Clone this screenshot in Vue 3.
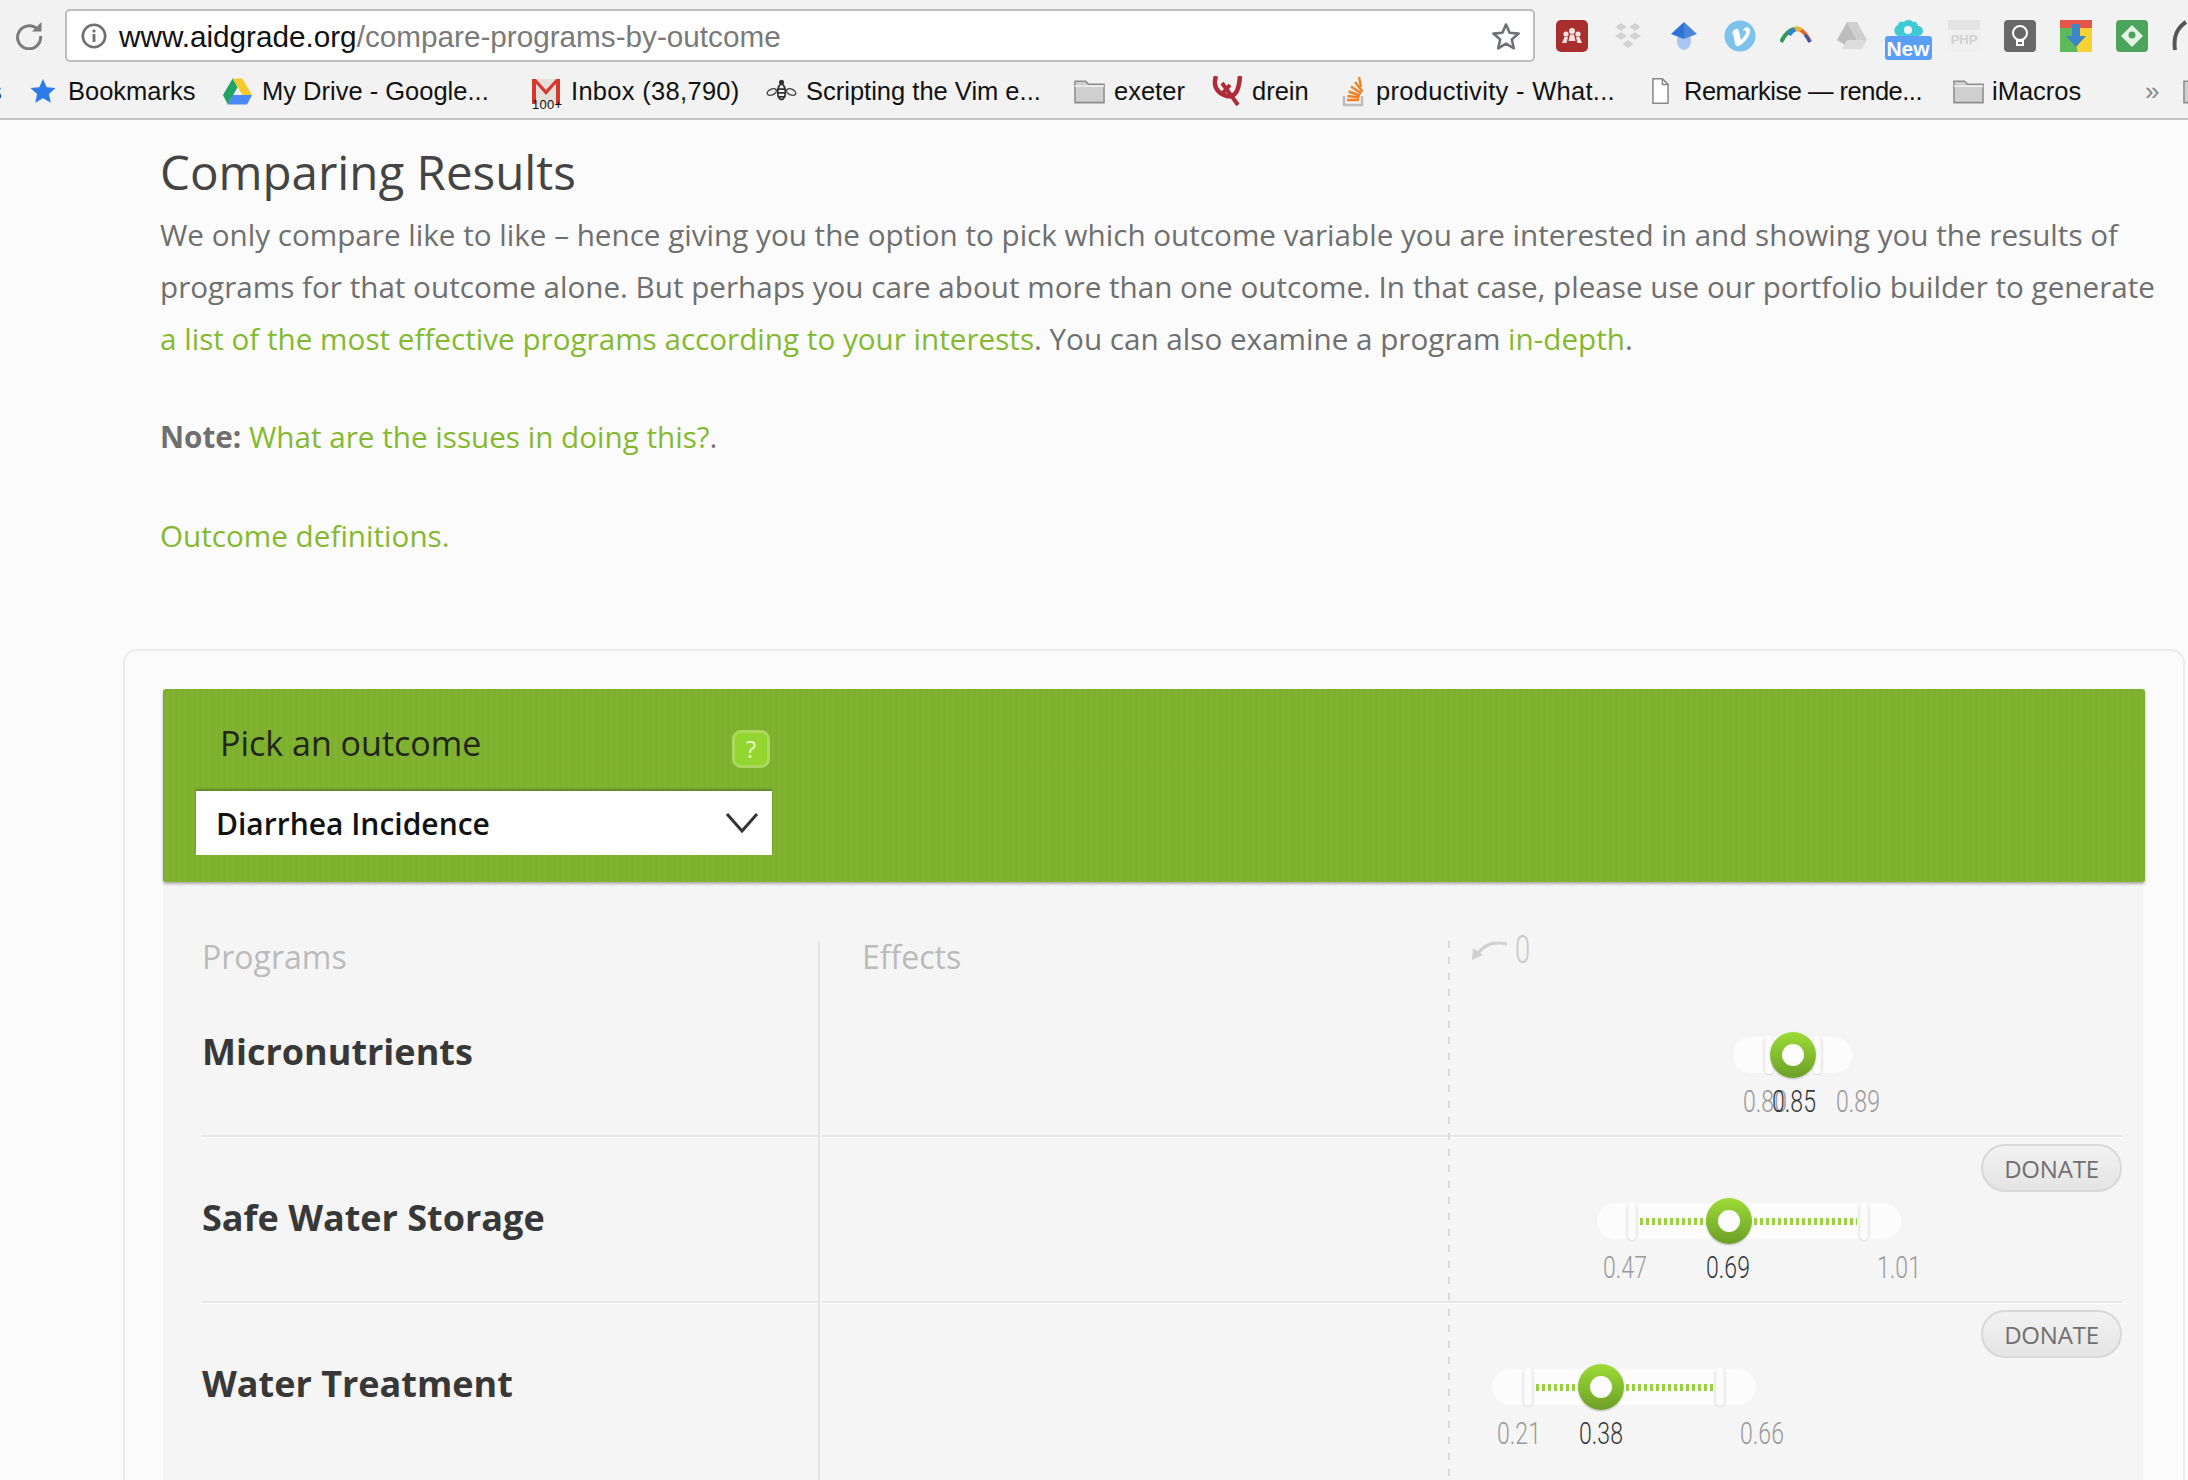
<template>
  <div class="page">
    <header class="chrome">
      <div class="toolbar">
        <svg class="reload" viewBox="0 0 28 28" width="28" height="28">
          <path d="M22.5 7.5A11.5 11.5 0 1 0 25.5 14" fill="none" stroke="#7b7b7b" stroke-width="3" />
          <path d="M17 9.5h9.5V0z" fill="#7b7b7b" />
        </svg>
        <div class="omnibox">
          <svg class="info" viewBox="0 0 26 26" width="26" height="26">
            <circle cx="13" cy="13" r="11.2" fill="none" stroke="#6f6f6f" stroke-width="2.6" />
            <rect x="11.6" y="11" width="2.8" height="8" fill="#6f6f6f" />
            <rect x="11.6" y="6.6" width="2.8" height="2.8" fill="#6f6f6f" />
          </svg>
          <span class="url"><span class="host">www.aidgrade.org</span>/compare-programs-by-outcome</span>
          <svg class="bookmark-star" viewBox="0 0 30 28" width="30" height="28">
            <path d="M15 2.5l3.6 8.3 9 .8-6.8 5.9 2 8.8-7.800-4.600-7.800 4.600 2-8.800-6.800-5.900 9-.8z" fill="none" stroke="#6e7278" stroke-width="2.600" stroke-linejoin="round" />
          </svg>
        </div>
        <div class="extensions">
          <span class="ext">
            <svg viewBox="0 0 32 32" width="32" height="32">
              <rect width="32" height="32" rx="5" fill="#a92e2e" />
              <circle cx="16" cy="11" r="3" fill="#f6e2e2" />
              <circle cx="10" cy="14" r="2.600" fill="#f6e2e2" />
              <circle cx="22" cy="14" r="2.600" fill="#f6e2e2" />
              <path d="M12.500 21l1.500-6.500h4l1.500 6.500zM6 23l2.500-6h3.500l-1.500 6zM26 23l-2.500-6H20l1.500 6z" fill="#f6e2e2" />
            </svg>
          </span>
          <span class="ext">
            <svg viewBox="0 0 32 32" width="32" height="32">
              <path d="M9 3l6 4-6 4-6-4zM23 3l6 4-6 4-6-4zM9 12l6 4-6 4-6-4zM23 12l6 4-6 4-6-4zM16 20l6 4-6 4-6-4z" fill="#d3d3d3" />
            </svg>
          </span>
          <span class="ext">
            <svg viewBox="0 0 32 32" width="32" height="32">
              <ellipse cx="16" cy="21" rx="7" ry="9" fill="#a8c8f4" />
              <path d="M16 2l13 12-13 5z" fill="#4d86d8" />
              <path d="M16 2L3 14l13 5z" fill="#2d74d8" />
            </svg>
          </span>
          <span class="ext">
            <svg viewBox="0 0 32 32" width="32" height="32">
              <circle cx="16" cy="16" r="15.500" fill="#7cc2ea" />
              <path d="M9 11c3-3 5-3 6 0l2 9c3-3 5-6 5-8 0-2-2-2-3-1 1-5 8-5 7 1-1 6-7 12-11 14-2 1-4-1-4-3l-2-9-1 .5z" fill="#fff" />
            </svg>
          </span>
          <span class="ext">
            <svg viewBox="0 0 32 32" width="32" height="32">
              <path d="M1 22C5 14 10 10 14 9" fill="none" stroke="#2e9d57" stroke-width="4" />
              <path d="M9 15c2-3 4-5 7-6" fill="none" stroke="#2f7fd8" stroke-width="4" />
              <path d="M15 9c2-1 4 0 6 1" fill="none" stroke="#e9b52e" stroke-width="5" />
              <path d="M21 10c4 3 7 7 9 12" fill="none" stroke="#e6632c" stroke-width="4" />
              <path d="M25 15c2 2 4 5 5 7" fill="none" stroke="#2f58b8" stroke-width="3" />
            </svg>
          </span>
          <span class="ext">
            <svg viewBox="0 0 32 32" width="32" height="32">
              <path d="M11 2h10l10 18H21z" fill="#cfcfcf" />
              <path d="M11 2l10 18-5 9L1 20z" fill="#bdbdbd" />
              <path d="M6 29l5-9h20l-5 9z" fill="#dcdcdc" />
            </svg>
          </span>
          <span class="ext ext-new">
            <svg viewBox="0 0 32 16" width="32" height="16">
              <path d="M6 16a6 6 0 0 1 0-11 4 4 0 0 1 6-3 6 6 0 0 1 9 0 4 4 0 0 1 5 4 5 5 0 0 1 0 10z" fill="#3ecbd6" />
              <circle cx="16" cy="10" r="4" fill="#f2f2f2" />
            </svg>
            <span class="new-tag">New</span>
          </span>
          <span class="ext">
            <span class="php-icon">PHP</span>
          </span>
          <span class="ext">
            <svg viewBox="0 0 32 32" width="32" height="32">
              <rect width="32" height="32" rx="4" fill="#686868" />
              <circle cx="16" cy="13" r="7" fill="none" stroke="#fff" stroke-width="2" />
              <path d="M13 21h6v4h-6z" fill="none" stroke="#fff" stroke-width="2" />
            </svg>
          </span>
          <span class="ext">
            <svg viewBox="0 0 32 32" width="32" height="32">
              <path d="M0 0h32v8H0z" fill="#e5554a" />
              <path d="M0 8h12l6 24H0z" fill="#5cba5c" />
              <path d="M32 8v24H18l-6-24z" fill="#f7d234" />
              <path d="M12 4h8v12h6L16 27 6 16h6z" fill="#3e86c8" />
            </svg>
          </span>
          <span class="ext">
            <svg viewBox="0 0 32 32" width="32" height="32">
              <rect width="32" height="32" rx="4" fill="#4ba35c" />
              <path d="M16 5l11 11-11 11L5 16z" fill="#e6f4e6" />
              <circle cx="16" cy="15" r="3.500" fill="#4ba35c" />
            </svg>
          </span>
          <span class="ext">
            <svg viewBox="0 0 32 32" width="32" height="32">
              <path d="M14 2C5 8 1 16 3 30" fill="none" stroke="#555" stroke-width="4" />
            </svg>
          </span>
        </div>
      </div>
      <nav class="bookmarks">
        <span class="cut">s</span>
        <a class="bm bm-a">
          <svg viewBox="0 0 26 26" width="26" height="26">
            <path d="M13 1l3.700 8.200 8.800.9-6.600 5.900 1.900 8.700L13 20.300l-7.800 4.400 1.900-8.700L.5 10.100l8.800-.9z" fill="#2b7be8" />
          </svg>
          Bookmarks
        </a>
        <a class="bm bm-b">
          <svg viewBox="0 0 32 28" width="31" height="28">
            <path d="M11 1h10l10 17H21z" fill="#f6c92d" />
            <path d="M11 1l5 9-10 18-5-10z" fill="#1fa463" />
            <path d="M6 28l5-10h20l-5 10z" fill="#4a8af4" />
          </svg>
          My Drive - Google...
        </a>
        <a class="bm bm-c">
          <span class="gmail">
            <svg viewBox="0 0 28 26" width="28" height="26">
              <rect y="1" width="28" height="25" fill="#e4e0dc" />
              <path d="M0 1h4v25H0zM24 1h4v25h-4zM0 1h4l10 11L24 1h4L14 17z" fill="#d8382c" />
            </svg>
            <span class="gmail-count">100+</span>
          </span>
          Inbox (38,790)
        </a>
        <a class="bm bm-d">
          <svg viewBox="0 0 32 26" width="31" height="26">
            <ellipse cx="16" cy="14" rx="4" ry="8" fill="none" stroke="#333" stroke-width="1.800" />
            <path d="M12 11h8M12 15h8M12 19h8" stroke="#333" stroke-width="1.800" />
            <circle cx="16" cy="4" r="2.600" fill="#333" />
            <ellipse cx="6" cy="14" rx="5" ry="3" transform="rotate(-25 6 14)" fill="none" stroke="#444" stroke-width="1.500" />
            <ellipse cx="26" cy="14" rx="5" ry="3" transform="rotate(25 26 14)" fill="none" stroke="#444" stroke-width="1.500" />
          </svg>
          Scripting the Vim e...
        </a>
        <a class="bm bm-e">
          <svg class="folder" viewBox="0 0 32 26" width="31" height="26">
            <path d="M1 3h11l3 3h16v19H1z" fill="#cfcfcf" stroke="#8d8d8d" stroke-width="1.600" />
            <path d="M1 8h30" stroke="#f2f2f2" stroke-width="1.600" />
          </svg>
          exeter
        </a>
        <a class="bm bm-f">
          <svg viewBox="0 0 32 30" width="32" height="30">
            <path d="M5 0c-3 9 0 17 11 20 9 2 12-7 13-20" fill="none" stroke="#ad2c38" stroke-width="4.500" />
            <path d="M11 7l16 22M19 9l-8 9" fill="none" stroke="#ad2c38" stroke-width="4" />
          </svg>
          drein
        </a>
        <a class="bm bm-g">
          <svg viewBox="0 0 22 32" width="22" height="32">
            <path d="M2 21v9h18v-9" fill="none" stroke="#bcbcbc" stroke-width="2.500" />
            <path d="M5 25h12M5.500 21l12 1.500M6.500 16.500l11.500 4M9 11.500l10.500 7M13 7l7.500 9.500M17 2l2 10" fill="none" stroke="#f48024" stroke-width="2.400" />
          </svg>
          productivity - What...
        </a>
        <a class="bm bm-h">
          <svg viewBox="0 0 18 28" width="17" height="28">
            <path d="M1 1h10l6 6v20H1z" fill="#fff" stroke="#888" stroke-width="1.600" />
            <path d="M11 1v6h6" fill="none" stroke="#888" stroke-width="1.600" />
          </svg>
          Remarkise — rende...
        </a>
        <a class="bm bm-i">
          <svg class="folder" viewBox="0 0 32 26" width="31" height="26">
            <path d="M1 3h11l3 3h16v19H1z" fill="#cfcfcf" stroke="#8d8d8d" stroke-width="1.600" />
            <path d="M1 8h30" stroke="#f2f2f2" stroke-width="1.600" />
          </svg>
          iMacros
        </a>
        <span class="more">»</span>
        <svg class="folder folder-cut" viewBox="0 0 32 26" width="31" height="26">
          <path d="M1 3h11l3 3h16v19H1z" fill="#cfcfcf" stroke="#8d8d8d" stroke-width="1.600" />
        </svg>
      </nav>
    </header>

    <main class="content">
      <section class="intro">
        <h1>Comparing Results</h1>
        <p class="lead">
          We only compare like to like – hence giving you the option to pick which outcome variable you are
          interested in and showing you the results of programs for that outcome alone. But perhaps you care
          about more than one outcome. In that case, please use our portfolio builder to generate
          <a>a list of the most effective programs according to your interests</a>. You can also examine a
          program <a>in-depth</a>.
        </p>
        <p class="lead note"><strong>Note:</strong> <a>What are the issues in doing this?</a>.</p>
        <p class="lead defs"><a>Outcome definitions.</a></p>
      </section>

      <section class="card">
        <div class="picker">
          <div class="picker-head">
            <h2>Pick an outcome</h2>
            <span class="help">?</span>
          </div>
          <div class="select">
            <span>Diarrhea Incidence</span>
            <svg viewBox="0 0 34 22" width="34" height="22">
              <path d="M2 2l15 17L32 2" fill="none" stroke="#333" stroke-width="3" />
            </svg>
          </div>
        </div>

        <div class="table">
          <div class="table-head">
            <span class="th-programs">Programs</span>
            <span class="th-effects">Effects</span>
            <span class="zero">
              <svg viewBox="0 0 38 22" width="38" height="22">
                <path d="M36 5C22 2 12 6 6 16" fill="none" stroke="#d0d0d0" stroke-width="3" />
                <path d="M1 21l1-12 10 7z" fill="#d0d0d0" />
              </svg>
              <span class="zero-num">0</span>
            </span>
          </div>

          <div v-for="row in rows" :key="row.name" class="row">
            <div class="row-name">{{ row.name }}</div>
            <div class="row-plot">
              <button v-if="row.donate" class="donate">DONATE</button>
              <div class="plot">
                <div class="pill" :style="{ left: row.pill[0] + 'px', width: row.pill[1] - row.pill[0] + 'px' }"></div>
                <div class="track" :style="{ left: row.lo + 8 + 'px', width: row.hi - row.lo - 15 + 'px' }"></div>
                <div class="cap" :style="{ left: row.lo + 'px' }"></div>
                <div class="cap" :style="{ left: row.hi + 'px' }"></div>
                <div class="handle" :style="{ left: row.mid + 'px' }"></div>
                <span class="val" :style="{ left: row.labels[0][1] + 'px' }">{{ row.labels[0][0] }}</span>
                <span class="val val-mid" :style="{ left: row.labels[1][1] + 'px' }">{{ row.labels[1][0] }}</span>
                <span class="val" :style="{ left: row.labels[2][1] + 'px' }">{{ row.labels[2][0] }}</span>
              </div>
            </div>
          </div>
        </div>
      </section>
    </main>
  </div>
</template>

<script setup>
// pixel positions are measured from the dashed zero line
const rows = [
  {
    name: 'Micronutrients',
    donate: false,
    pill: [284, 403],
    lo: 320,
    mid: 344,
    hi: 368,
    labels: [['0.80', 316], ['0.85', 345], ['0.89', 409]],
  },
  {
    name: 'Safe Water Storage',
    donate: true,
    pill: [148, 452],
    lo: 183,
    mid: 280,
    hi: 415,
    labels: [['0.47', 176], ['0.69', 279], ['1.01', 450]],
  },
  {
    name: 'Water Treatment',
    donate: true,
    pill: [43, 307],
    lo: 79,
    mid: 152,
    hi: 271,
    labels: [['0.21', 70], ['0.38', 152], ['0.66', 313]],
  },
]
</script>

<style>
html, body {
  margin: 0;
  height: 100%;
  overflow: hidden;
  background: #fbfbfb;
}
</style>

<style scoped>
* {
  box-sizing: border-box;
}

.page {
  width: 2188px;
  height: 1480px;
  overflow: hidden;
  background: #fbfbfb;
  font-family: 'Open Sans', sans-serif;
}

/* browser bar */
.chrome {
  height: 120px;
  background: #f2f2f2;
  border-bottom: 2px solid #c6c6c6;
  font-family: 'Liberation Sans', Arial, sans-serif;
}

.toolbar {
  display: flex;
  align-items: center;
  height: 71px;
  padding: 0 0 0 15px;
}

.reload {
  flex: none;
  margin-right: 22px;
}

.omnibox {
  flex: none;
  width: 1470px;
  height: 53px;
  display: flex;
  align-items: center;
  padding: 0 12px 0 14px;
  background: #fff;
  border: 2px solid #bdbdbd;
  border-radius: 5px;
}

.url {
  flex: 1;
  margin-left: 12px;
  padding-top: 3px;
  font-size: 29.700px;
  color: #7a7a7a;
  white-space: nowrap;
}

.host {
  color: #111;
}

.extensions {
  flex: none;
  display: flex;
  margin-left: 21px;
}

.ext {
  position: relative;
  flex: none;
  display: flex;
  justify-content: flex-start;
  width: 32px;
  height: 32px;
  margin-right: 24px;
}

.ext-new {
  flex-direction: column;
  align-items: center;
}

.ext-new svg {
  flex: none;
}

.new-tag {
  width: 47px;
  height: 24px;
  line-height: 25px;
  margin: 0 -8px;
  background: #5a9ef5;
  border-radius: 3px;
  color: #fff;
  font-size: 21px;
  font-weight: 700;
  text-align: center;
  flex: none;
}

.php-icon {
  width: 32px;
  height: 32px;
  background: linear-gradient(180deg, #e4e4e4 0 30%, #efefef 30%);
  color: #d2d2d2;
  font-size: 13px;
  font-weight: 700;
  text-align: center;
  line-height: 40px;
}

.bookmarks {
  position: relative;
  display: flex;
  align-items: center;
  height: 40px;
  padding-left: 30px;
  font-size: 25.500px;
  color: #111;
  white-space: nowrap;
}

.bm {
  flex: none;
  display: flex;
  align-items: center;
  gap: 11px;
}

.bm-a { width: 192px; gap: 12px; }
.bm-b { width: 310px; gap: 9px; }
.bm-c { width: 234px; letter-spacing: 0.3px; }
.bm-d { width: 308px; gap: 9px; }
.bm-e { width: 137px; gap: 9px; }
.bm-f { width: 131px; gap: 9px; }
.bm-g { width: 310px; gap: 12px; letter-spacing: 0.3px; }
.bm-h { width: 301px; gap: 15px; letter-spacing: -0.5px; }
.bm-i { width: 150px; gap: 8px; }

.cut {
  position: absolute;
  left: -11px;
}

.gmail {
  position: relative;
  display: block;
  width: 28px;
  height: 26px;
}

.gmail-count {
  position: absolute;
  left: 0;
  top: 20px;
  font-size: 13px;
  line-height: 13px;
  color: #111;
}

.more {
  margin-left: 42px;
  color: #888;
  font-size: 26px;
}

.folder-cut {
  flex: none;
  margin-left: 24px;
}

/* page body */
.intro {
  padding: 21px 0 0 160px;
  height: 529px;
  color: #6f6f6f;
}

h1 {
  margin: 0;
  font-size: 47.500px;
  font-weight: 400;
  line-height: 62px;
  color: #444;
}

.lead {
  width: 2000px;
  margin: 6px 0 0;
  font-size: 29.650px;
  line-height: 52px;
}

.lead a {
  color: #84b92f;
}

.note {
  margin-top: 46px;
}

.note strong {
  font-weight: 700;
}

.defs {
  margin-top: 47px;
}

.card {
  width: 2062px;
  margin-left: 123px;
  height: 900px;
  padding: 38px 0 0 38px;
  background: #fbfbfb;
  border: 2px solid #ececec;
  border-radius: 14px 14px 0 0;
}

.picker {
  position: relative;
  z-index: 1;
  width: 1982px;
  height: 193px;
  padding: 32px 0 0 33px;
  background: #7fb22f repeating-linear-gradient(90deg, rgba(0, 0, 0, 0.012) 0 3px, rgba(255, 255, 255, 0.012) 3px 6px);
  border-radius: 3px;
  box-shadow: 0 2px 3px rgba(0, 0, 0, 0.3);
}

.picker-head {
  display: flex;
  align-items: center;
  width: 574px;
  height: 50px;
  padding-left: 24px;
}

.picker-head h2 {
  flex: 1;
  margin: -6px 0 0;
  font-size: 34px;
  font-weight: 400;
  color: #23261c;
}

.help {
  width: 38px;
  height: 38px;
  margin-top: 6px;
  background: #93d62f;
  border: 3px solid #acd85f;
  border-radius: 9px;
  color: #e8f6c8;
  font-size: 24px;
  font-weight: 400;
  line-height: 32px;
  text-align: center;
}

.select {
  display: flex;
  align-items: center;
  justify-content: space-between;
  width: 576px;
  height: 64px;
  margin-top: 20px;
  padding: 0 13px 0 20px;
  background: #fff;
  box-shadow: 0 -2px 2px rgba(0, 0, 0, 0.25);
  font-size: 30px;
  font-weight: 600;
  color: #111;
}

.table {
  position: relative;
  width: 1980px;
  height: 599px;
  padding-top: 59px;
  background: #f5f5f5;
}

/* solid column rule */
.table::before {
  content: '';
  position: absolute;
  left: 655px;
  top: 59px;
  bottom: 0;
  width: 2px;
  background: #e4e4e4;
}

/* dashed zero line */
.table::after {
  content: '';
  position: absolute;
  left: 1285px;
  top: 59px;
  bottom: 0;
  width: 2px;
  background: repeating-linear-gradient(180deg, #dadada 0 7px, transparent 7px 16px);
}

.table-head {
  position: relative;
  height: 30px;
  font-size: 32px;
  line-height: 32px;
  color: #bbb;
}

.th-programs {
  position: absolute;
  left: 39px;
}

.th-effects {
  position: absolute;
  left: 699px;
}

.zero {
  position: absolute;
  left: 1308px;
  top: -8px;
  display: flex;
  align-items: center;
  gap: 6px;
}

.zero-num {
  font-family: Roboto, sans-serif;
  font-weight: 300;
  font-size: 38px;
  line-height: 34px;
  color: #c8c8c8;
  display: inline-block;
  transform: scaleX(0.72);
  transform-origin: left center;
}

.row {
  display: flex;
  height: 166px;
  margin: 0 21px 0 39px;
}

.row-name {
  flex: none;
  width: 616px;
  height: 100%;
  padding-bottom: 4px;
  display: flex;
  align-items: center;
  font-size: 36px;
  font-weight: 700;
  color: #383838;
  border-bottom: 2px solid #e6e6e6;
  box-shadow: 0 1px 0 #fff;
}

.row-plot {
  position: relative;
  flex: 1;
  margin-left: 4px;
  border-bottom: 2px solid #e6e6e6;
  box-shadow: 0 1px 0 #fff;
}

.row:last-child .row-name,
.row:last-child .row-plot {
  border-bottom-color: transparent;
  box-shadow: none;
}

.plot {
  position: absolute;
  left: 627px;
  top: 84px;
  width: 0;
  height: 0;
}

.pill {
  position: absolute;
  top: -18px;
  height: 36px;
  background: #fcfcfc;
  border-radius: 18px;
}

.track {
  position: absolute;
  top: -3.500px;
  height: 7px;
  background: repeating-linear-gradient(90deg, #9ad13e 0 3px, transparent 3px 6px);
}

.cap {
  position: absolute;
  top: -19px;
  width: 12px;
  height: 38px;
  margin-left: -6px;
  background: linear-gradient(90deg, #e9e9e9, #fdfdfd 35%, #fdfdfd 65%, #e9e9e9);
  border-radius: 6px;
  box-shadow: 0 1px 1px rgba(0, 0, 0, 0.12);
}

.handle {
  position: absolute;
  top: -23px;
  width: 46px;
  height: 46px;
  margin-left: -23px;
  border-radius: 50%;
  background: linear-gradient(180deg, #9cdc36, #6c9f27);
  box-shadow: 0 1px 2px rgba(0, 0, 0, 0.25);
}

.handle::after {
  content: '';
  position: absolute;
  left: 12px;
  top: 12px;
  width: 22px;
  height: 22px;
  border-radius: 50%;
  background: #fbfbfb;
}

.val {
  position: absolute;
  top: 28px;
  font-family: Roboto, sans-serif;
  font-weight: 300;
  font-size: 32px;
  line-height: 36px;
  color: #9a9a9a;
  white-space: nowrap;
  transform: translateX(-50%) scaleX(0.72);
}

.val-mid {
  color: #333840;
}

.donate {
  position: absolute;
  right: 0;
  top: 7px;
  width: 141px;
  height: 48px;
  padding: 0;
  background: linear-gradient(180deg, #f2f2f2, #e4e4e4);
  border: 2px solid #d8d8d8;
  border-radius: 24px;
  color: #707070;
  font-family: 'Open Sans', sans-serif;
  font-size: 24px;
  letter-spacing: -0.2px;
}
</style>
